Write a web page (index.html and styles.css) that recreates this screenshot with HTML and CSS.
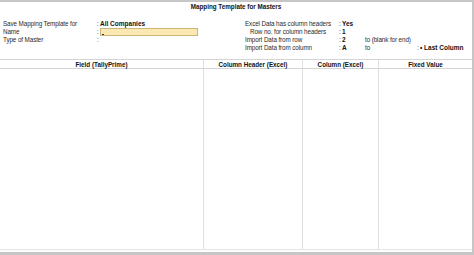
FILE: index.html
```html
<!DOCTYPE html>
<html lang="en">
<head>
    <meta charset="UTF-8">
    <title>Mapping Template for Masters</title>
    <link rel="stylesheet" href="styles.css">
</head>
<body>
    <div class="screen">
        <div class="title">Mapping Template for Masters</div>
        <div class="form">
            <div class="col left">
                <div class="row"><span class="label">Save Mapping Template for</span><span class="colon">:</span><span class="value bold">All Companies</span></div>
                <div class="row"><span class="label">Name</span><span class="colon">:</span><span class="input"><span class="cursor"></span></span></div>
                <div class="row"><span class="label">Type of Master</span><span class="colon">:</span><span class="value"></span></div>
            </div>
            <div class="col right">
                <div class="row"><span class="label">Excel Data has column headers</span><span class="colon">:</span><span class="value bold">Yes</span></div>
                <div class="row"><span class="label indent">Row no. for column headers</span><span class="colon">:</span><span class="value bold">1</span></div>
                <div class="row"><span class="label">Import Data from row</span><span class="colon">:</span><span class="value bold short">2</span><span class="extra">to (blank for end)</span></div>
                <div class="row"><span class="label">Import Data from column</span><span class="colon">:</span><span class="value bold short">A</span><span class="extra to">to</span><span class="colon">:</span><span class="value bold">&bull; Last Column</span></div>
            </div>
        </div>
        <table class="grid">
            <thead>
                <tr>
                    <th class="c1">Field (TallyPrime)</th>
                    <th class="c2">Column Header (Excel)</th>
                    <th class="c3">Column (Excel)</th>
                    <th class="c4">Fixed Value</th>
                </tr>
            </thead>
            <tbody>
                <tr><td></td><td></td><td></td><td></td></tr>
            </tbody>
        </table>
    </div>
</body>
</html>
```

FILE: styles.css
```css
html, body {
    margin: 0;
    padding: 0;
    background: #fff;
}
body {
    font-family: "Liberation Sans", Arial, sans-serif;
    font-size: 6.3px;
    letter-spacing: -0.1px;
    color: #2a2a2a;
}
.screen {
    width: 472px;
    height: 248px;
    padding-bottom: 2px;
    border-top: 2px solid #c6c6c6;
    border-right: 2px solid #c6c6c6;
    border-bottom: 3px solid #c6c6c6;
    display: flex;
    flex-direction: column;
}
.title {
    text-align: center;
    font-weight: bold;
    font-size: 6.3px;
    letter-spacing: 0;
    color: #111;
    padding-top: 1px;
    height: 12px;
}
.form {
    display: flex;
    padding: 5px 0 0 3px;
    height: 39px;
}
.col {
    display: flex;
    flex-direction: column;
}
.left {
    width: 242px;
}
.row {
    display: flex;
    height: 8px;
    line-height: 8px;
    white-space: nowrap;
}
.label {
    width: 94px;
}
.label.indent {
    padding-left: 5px;
    width: 89px;
}
.colon {
    width: 3px;
}
.bold {
    font-weight: bold;
    font-size: 6.5px;
    letter-spacing: 0;
    color: #111;
}
.value.short {
    width: 23px;
}
.extra {
    width: 52px;
}
.input {
    display: inline-block;
    width: 96px;
    height: 6px;
    background: #fbe8b2;
    border: 1px solid #cdb679;
    position: relative;
}
.cursor {
    position: absolute;
    left: 1px;
    bottom: 0;
    width: 2px;
    height: 1px;
    background: #333;
}
.grid {
    border-collapse: collapse;
    width: 100%;
    flex: 1;
    table-layout: fixed;
}
.grid th {
    font-weight: bold;
    font-size: 6.3px;
    letter-spacing: 0;
    color: #111;
    height: 8px;
    padding: 0;
    border-top: 1px solid #d4d4d4;
    border-bottom: 1px solid #d4d4d4;
    text-align: center;
}
.grid td {
    padding: 0;
    border-bottom: 1px solid #e4e4e4;
}
.grid th + th, .grid td + td {
    border-left: 1px solid #e0e0e0;
}
.c1 { width: 203px; }
.c2 { width: 98px; }
.c3 { width: 75px; }
```
